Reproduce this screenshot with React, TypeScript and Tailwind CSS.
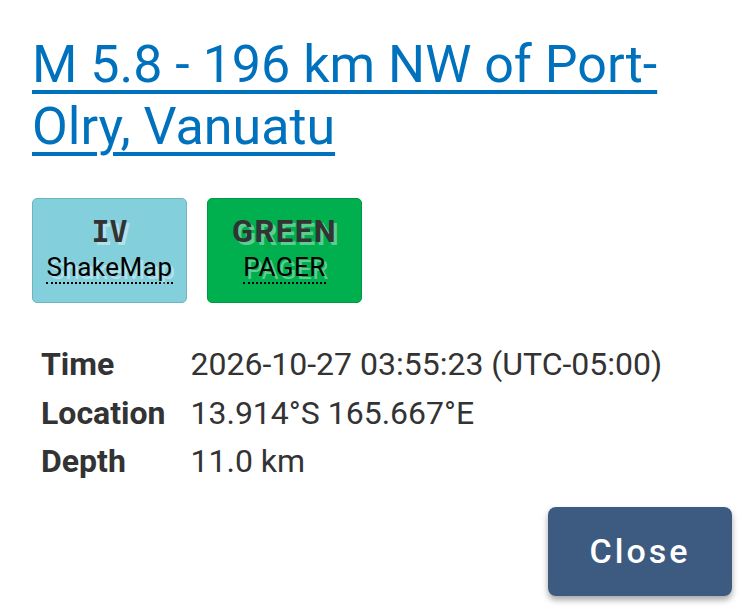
export default function App() {
  const rows: [string, string][] = [
    ["Time", "2026-10-27 03:55:23 (UTC-05:00)"],
    ["Location", "13.914°S 165.667°E"],
    ["Depth", "11.0 km"],
  ];
  const glow = "[text-shadow:3px_3px_0_rgba(255,255,255,0.4)]";
  return (
    <div
      className="w-[747px] h-[610px] bg-white overflow-hidden pl-[32px] pr-[15px] pt-[34px]"
      style={{ fontFamily: "Roboto, 'Liberation Sans', sans-serif" }}
    >
      <h1 className="text-[52px] leading-[62px] font-normal">
        <a href="#" className="text-[#0071bc] underline decoration-[4px] underline-offset-[8px]">
          M 5.8 - 196 km NW of Port-Olry, Vanuatu
        </a>
      </h1>

      <div className="flex gap-[20px] mt-[40px]">
        <div className="w-[155px] h-[105px] rounded-[5px] bg-[#83d0dc] border border-[#6fb5c0] flex flex-col items-center pt-[16px] text-[#333]">
          <span
            className={`text-[30px] leading-[34px] font-bold ${glow}`}
            style={{ fontFamily: "'DejaVu Sans Mono', monospace" }}
          >
            IV
          </span>
          <abbr className={`mt-[3px] text-[26px] leading-[30px] tracking-[0.5px] no-underline border-b-[2px] border-dotted border-black text-black ${glow}`}>
            ShakeMap
          </abbr>
        </div>
        <div className="w-[155px] h-[105px] rounded-[5px] bg-[#00b04f] border border-[#009a45] flex flex-col items-center pt-[16px] text-[#333]">
          <span className={`text-[31px] leading-[34px] font-bold tracking-[1.5px] ${glow}`}>GREEN</span>
          <abbr className={`mt-[3px] text-[26px] leading-[30px] tracking-[0.5px] no-underline border-b-[2px] border-dotted border-black text-black ${glow}`}>
            PAGER
          </abbr>
        </div>
      </div>

      <div className="mt-[37px] ml-[9px] grid grid-cols-[auto_1fr] gap-x-[25px] text-[32px] leading-[48.5px] text-[#333]">
        {rows.map(([k, v]) => (
          <div key={k} className="contents">
            <div className="font-bold">{k}</div>
            <div>{v}</div>
          </div>
        ))}
      </div>

      <div className="flex justify-end mt-[21px]">
        <button className="w-[184px] h-[89px] rounded-[8px] bg-[#3d5a80] text-white text-[34px] font-medium tracking-[3px] shadow-[0_4px_6px_rgba(0,0,0,0.35)]">
          Close
        </button>
      </div>
    </div>
  );
}
